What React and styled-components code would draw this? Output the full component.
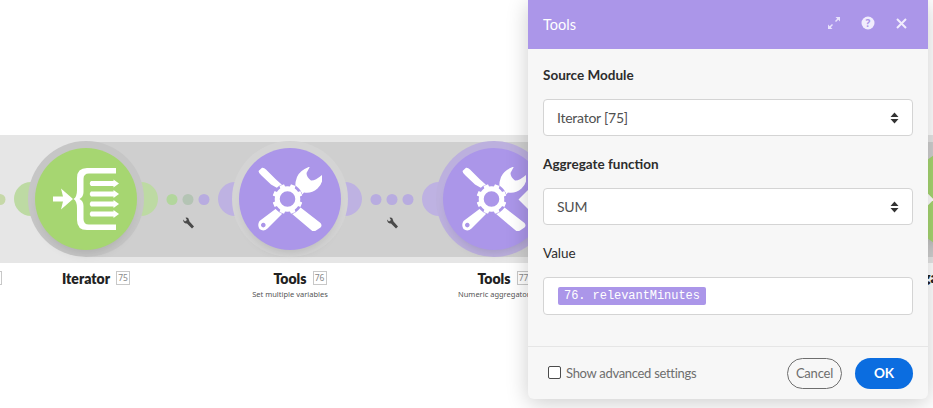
import React from "react";
import styled, { createGlobalStyle } from "styled-components";

const Global = createGlobalStyle`
  html, body { margin: 0; padding: 0; background: #fff; }
  body { width: 933px; height: 408px; overflow: hidden; font-family: "Lato", "Noto Sans", sans-serif; }
`;

const Page = styled.div`
  position: relative;
  width: 933px;
  height: 408px;
  overflow: hidden;
  background: #fff;
`;

const Pipeline = styled.div`
  position: relative;
  display: flex;
  width: 1078px;
  margin-left: -16px;
  padding-top: 135px;

  &::before {
    content: "";
    position: absolute;
    left: 16px;
    right: 0;
    top: 135px;
    height: 128px;
    background: #e6e6e6;
  }
  &::after {
    content: "";
    position: absolute;
    left: 102px;
    right: 0;
    top: 142px;
    height: 115px;
    background: #cfcfcf;
  }
`;

const Node = styled.section`
  position: relative;
  z-index: 1;
  flex: none;
  width: 204px;
  margin-left: ${(p) => p.$gap || 0}px;
  display: flex;
  flex-direction: column;
  align-items: center;
`;

const Stage = styled.div`
  position: relative;
  width: 100%;
  height: 128px;
  display: flex;
  align-items: center;
  justify-content: center;
`;

const Bulge = styled.div`
  position: absolute;
  top: 47px;
  width: 34px;
  height: 34px;
  border-radius: 50%;
  left: calc(50% + ${(p) => p.$side * 55 - 17}px);
  background: ${(p) => (p.$green ? "#bddaa3" : "#beb2e2")};
`;

const Connector = styled.div`
  position: absolute;
  top: 59px;
  left: ${(p) => (p.$lead ? "0" : "100%")};
  transform: translateX(-50%);
  display: flex;
  flex-direction: column;
  align-items: center;
  gap: 12px;
`;

const Dots = styled.div`
  display: flex;
  gap: 5px;
`;

const Dot = styled.span`
  width: 11px;
  height: 11px;
  border-radius: 50%;
  background: ${(p) => p.$color};
`;

const Ring = styled.div`
  position: relative;
  z-index: 2;
  flex: none;
  width: 116px;
  height: 116px;
  border-radius: 50%;
  background: ${(p) => p.$color};
  display: flex;
  align-items: center;
  justify-content: center;
`;

const Disc = styled.div`
  position: relative;
  width: 102px;
  height: 102px;
  border-radius: 50%;
  background: ${(p) => p.$color};
  box-shadow: 0 8px 12px -6px rgba(0, 0, 0, 0.14);
  display: flex;
  align-items: center;
  justify-content: center;
`;

const Arrow = styled.div`
  position: absolute;
  top: calc(50% - ${(p) => p.$size / 2}px);
  left: calc(50% + ${(p) => p.$offset - p.$size / 2}px);
  width: ${(p) => p.$size}px;
  height: ${(p) => p.$size}px;
  background: #fff;
  transform: rotate(45deg);
`;

const LabelRow = styled.div`
  position: relative;
  margin-top: 5px;
  height: 20px;
  display: flex;
  align-items: center;
`;

const Name = styled.span`
  font-size: 14px;
  font-weight: 800;
  color: #222;
`;

const Badge = styled.span`
  position: absolute;
  left: calc(100% + 6px);
  top: 3px;
  border: 1px solid #c8c8c8;
  width: 12px;
  height: 12px;
  font-family: "Noto Sans", sans-serif;
  font-size: 8.5px;
  line-height: 12px;
  text-align: center;
  color: #8a8a8a;
`;

const Caption = styled.div`
  font-family: "Noto Sans", sans-serif;
  font-size: 7.5px;
  line-height: 12px;
  color: #555;
  white-space: nowrap;
`;

const CutBadge = styled.div`
  position: absolute;
  left: -12px;
  top: 271px;
  width: 12px;
  height: 12px;
  border: 1px solid #c8c8c8;
`;

const CutName = styled.div`
  position: absolute;
  left: 923px;
  top: 268px;
  font-size: 14px;
  line-height: 20px;
  font-weight: 800;
  color: #222;
  white-space: nowrap;
`;

const Modal = styled.div`
  position: absolute;
  z-index: 10;
  left: 528px;
  top: 0;
  width: 400px;
  height: 399px;
  display: flex;
  flex-direction: column;
  background: #f7f7f7;
  border-radius: 0 0 6px 6px;
  box-shadow: 0 4px 22px rgba(0, 0, 0, 0.2);
  overflow: hidden;
`;

const Header = styled.header`
  flex: none;
  height: 49px;
  padding: 0 20px 0 15px;
  box-sizing: border-box;
  background: #ab96e9;
  display: flex;
  align-items: center;
  justify-content: space-between;
  color: #fff;
`;

const Title = styled.h2`
  margin: 0;
  font-size: 14.5px;
  font-weight: 400;
`;

const HeaderIcons = styled.div`
  display: flex;
  align-items: center;
  gap: 20px;
  margin-top: -3px;
`;

const Body = styled.div`
  flex: 1;
  padding: 17px 15px 0;
  display: flex;
  flex-direction: column;
`;

const FieldLabel = styled.label`
  font-size: 13.5px;
  line-height: 18px;
  font-weight: ${(p) => (p.$plain ? 400 : 700)};
  color: #2d2d2d;
  margin-bottom: 15px;
`;

const Field = styled.div`
  height: 37px;
  box-sizing: border-box;
  background: #fff;
  border: 1px solid #d4d4d4;
  border-radius: 4px;
  padding: 0 13px;
  margin-bottom: 19px;
  display: flex;
  align-items: center;
  justify-content: space-between;
  font-size: 14px;
  letter-spacing: -0.25px;
  color: #505050;
`;

const ValueField = styled(Field)`
  margin-bottom: 0;
  height: 38px;
  padding: 0 14px;
`;

const Pill = styled.span`
  background: #ab96e9;
  color: #fff;
  border-radius: 2px;
  height: 18px;
  padding: 0 6px;
  display: inline-flex;
  align-items: center;
  font-family: "Liberation Mono", monospace;
  font-size: 12px;
  letter-spacing: -0.05px;
`;

const Footer = styled.footer`
  flex: none;
  height: 52px;
  border-top: 1px solid #e6e6e6;
  padding: 0 15px 0 20px;
  display: flex;
  align-items: center;
  justify-content: space-between;
`;

const Check = styled.label`
  display: flex;
  align-items: center;
  gap: 5px;
  font-size: 13px;
  letter-spacing: -0.3px;
  color: #6e6e6e;
`;

const Box = styled.span`
  width: 11px;
  height: 11px;
  border: 1px solid #4b4b4b;
  border-radius: 2px;
  background: #fff;
  margin-top: -2px;
`;

const Buttons = styled.div`
  display: flex;
  gap: 13px;
`;

const CancelBtn = styled.button`
  width: 55px;
  height: 31px;
  border: 1px solid #6e6e6e;
  border-radius: 16px;
  background: transparent;
  padding: 0;
  font: inherit;
  font-size: 13px;
  letter-spacing: -0.2px;
  color: #6e6e6e;
`;

const OkBtn = styled.button`
  width: 58px;
  height: 31px;
  border: 0;
  border-radius: 16px;
  background: #0b6de0;
  padding: 0;
  font: inherit;
  font-size: 13.5px;
  font-weight: 700;
  color: #fff;
`;

const TEETH = [0, 45, 90, 135, 180, 225, 270, 315];

const ToolsIcon = () => (
  <svg width="64" height="64" viewBox="0 0 64 64" fill="#fff">
    <path d="M0.500 4 L4 0.800 Q6 0.500 8 2.500 L18 12.500 L27 20.500 L24.500 24 L13 17.500 L3.500 8.500 Q0.500 6 0.500 4 Z" />
    <path d="M37.500 25 Q36.500 16 39 10 Q42 3 52 -0.500 L48.500 6 Q48.500 10 53 13.500 Q57 14 64.500 7.500 Q65.500 16 59.500 21.500 Q53 27 46 25.500 L42 30 Z" />
    <path d="M38.700 37.500 L62.500 56 Q64.500 58.500 62.500 60.500 L58 63.500 Q56 65 54 63.700 L31.500 44.700 Z" />
    <path fillRule="evenodd" d="M21.500 39 L26 45 L9.500 61.500 Q5.500 65 1.500 62 Q-1 58 1.500 54 Z M5.300 55.800 a2.300 2.300 0 1 0 0.010 0 Z" />
    <circle cx="29.500" cy="32" r="15.500" fill="#ab96e9" />
    <circle cx="29.500" cy="32" r="10.300" fill="none" stroke="#fff" strokeWidth="5" />
    {TEETH.map((a) => (
      <rect key={a} x="27" y="17" width="5" height="4.500" rx="0.600" transform={`rotate(${a + 22.5} 29.500 32)`} />
    ))}
  </svg>
);

const ARROW_ROWS = [15.5, 26, 36, 46];

const IteratorIcon = () => (
  <svg width="66" height="62" viewBox="0 0 66 62" fill="#fff">
    <path d="M0 28.500 H10 L8 20.500 L20 31 L8 41.500 L10 33.500 H0 Z" />
    <path d="M63 0 H34 Q24 0 24 10 V22 Q24 29 20.500 31 Q24 33 24 40 V52 Q24 62 34 62 H63 V56.500 H36 Q30.500 56.500 30.500 51 V38 Q30.500 33 26.500 31 Q30.500 29 30.500 24 V11 Q30.500 5.500 36 5.500 H63 Z" />
    {ARROW_ROWS.map((y) => (
      <path key={y} d={`M38 ${y - 2.5} H60.500 V${y - 4} L66 ${y} L60.500 ${y + 4} V${y + 2.5} H38 Q35.500 ${y} 38 ${y - 2.5} Z`} />
    ))}
  </svg>
);

const Wrench = () => (
  <svg width="12" height="12" viewBox="0 0 12 12" fill="#4a4a4a">
    <path d="M0.500 2.500 L2.500 4.500 L4.500 3 L3 0.700 Q6 0 6.500 3 L7 4.500 L11.500 9.500 L9.500 11.500 L4.500 6.500 Q1 7 0.500 2.500 Z" />
  </svg>
);

const Updown = () => (
  <svg width="9" height="12" viewBox="0 0 9 12" fill="#333">
    <path d="M4.500 0.500 L8.500 5 H0.500 Z M4.500 11.500 L0.500 7 H8.500 Z" />
  </svg>
);

const PURPLE = "#ab96e9";
const GREEN = "#a6d671";
const LINK = "#b8ace0";

const Link = ({ lead, colors, wrench }) => (
  <Connector $lead={lead}>
    <Dots>
      {colors.map((c, i) => <Dot key={i} $color={c} />)}
    </Dots>
    {wrench && <Wrench />}
  </Connector>
);

export default function App() {
  return (
    <Page>
      <Global />
      <Pipeline>
        <Node>
          <Stage>
            <Link lead colors={["#c6d8a8", "#c6d8a8", "#c6d8a8"]} />
            <Bulge $side={-1} $green />
            <Bulge $side={1} $green />
            <Ring $color="#c6c6c6">
              <Disc $color={GREEN}><IteratorIcon /></Disc>
            </Ring>
            <Link wrench colors={["#b2d69c", "#b4c4b4", LINK]} />
          </Stage>
          <LabelRow><Name>Iterator</Name><Badge>75</Badge></LabelRow>
        </Node>
        <Node>
          <Stage>
            <Bulge $side={-1} />
            <Bulge $side={1} />
            <Ring $color="#d4d4d4">
              <Disc $color={PURPLE}><ToolsIcon /></Disc>
            </Ring>
            <Link wrench colors={[LINK, LINK, LINK]} />
          </Stage>
          <LabelRow><Name>Tools</Name><Badge>76</Badge></LabelRow>
          <Caption>Set multiple variables</Caption>
        </Node>
        <Node>
          <Stage>
            <Bulge $side={-1} />
            <Ring $color="#bcb0de">
              <Disc $color={PURPLE}>
                <ToolsIcon />
                <Arrow $offset={36} $size={17} />
              </Disc>
            </Ring>
          </Stage>
          <LabelRow><Name>Tools</Name><Badge>77</Badge></LabelRow>
          <Caption>Numeric aggregator</Caption>
        </Node>
        <Node $gap={262}>
          <Stage>
            <Ring $color="#cfcfcf">
              <Disc $color={GREEN}>
                <Arrow $offset={-36} $size={13} />
              </Disc>
            </Ring>
          </Stage>
        </Node>
      </Pipeline>
      <CutBadge />
      <CutName>ga</CutName>
      <Modal>
        <Header>
          <Title>Tools</Title>
          <HeaderIcons>
            <svg width="14" height="14" viewBox="0 0 14 14" fill="#e8e2fb">
              <path d="M8.500 1 H13 V5.500 L11.300 3.800 L9 6 L8 5 L10.200 2.700 Z M5.500 13 H1 V8.500 L2.700 10.200 L5 8 L6 9 L3.800 11.300 Z" />
            </svg>
            <svg width="14" height="14" viewBox="0 0 14 14">
              <circle cx="7" cy="7" r="6.500" fill="#f1edfd" />
              <text x="7" y="10.500" fontSize="10" fontWeight="700" textAnchor="middle" fill="#ab96e9" fontFamily="Noto Sans">?</text>
            </svg>
            <svg width="13" height="13" viewBox="0 0 13 13" stroke="#f1edfd" strokeWidth="2" fill="none">
              <path d="M2 2 L11 11 M11 2 L2 11" />
            </svg>
          </HeaderIcons>
        </Header>
        <Body>
          <FieldLabel>Source Module</FieldLabel>
          <Field>Iterator [75]<Updown /></Field>
          <FieldLabel>Aggregate function</FieldLabel>
          <Field>SUM<Updown /></Field>
          <FieldLabel $plain>Value</FieldLabel>
          <ValueField><Pill>76. relevantMinutes</Pill></ValueField>
        </Body>
        <Footer>
          <Check><Box />Show advanced settings</Check>
          <Buttons>
            <CancelBtn>Cancel</CancelBtn>
            <OkBtn>OK</OkBtn>
          </Buttons>
        </Footer>
      </Modal>
    </Page>
  );
}
